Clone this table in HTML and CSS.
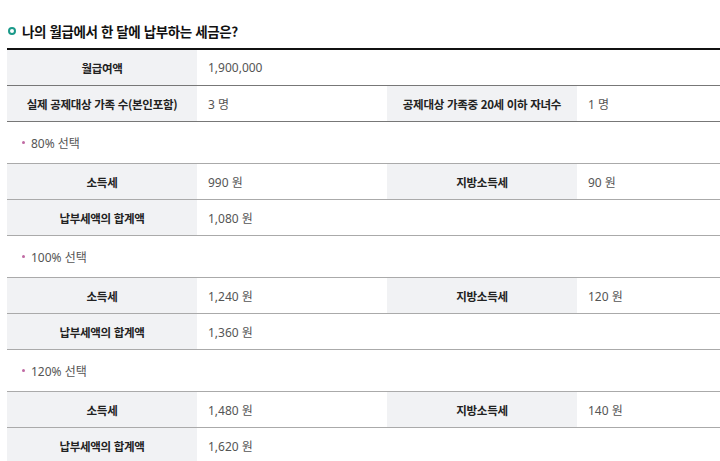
FILE: index.html
```html
<!DOCTYPE html>
<html lang="ko">
<head>
<meta charset="utf-8">
<link rel="stylesheet" href="styles.css">
</head>
<body>
<div class="page">
  <h2 class="title"><span class="ring"></span>나의 월급에서 한 달에 납부하는 세금은?</h2>

  <div class="tbl tbl-main">
    <div class="row">
      <div class="th">월급여액</div>
      <div class="td span3">1,900,000</div>
    </div>
    <div class="row">
      <div class="th">실제 공제대상 가족 수(본인포함)</div>
      <div class="td">3 명</div>
      <div class="th">공제대상 가족중 20세 이하 자녀수</div>
      <div class="td">1 명</div>
    </div>
  </div>

  <p class="sect"><span class="dot"></span>80% 선택</p>
  <div class="tbl">
    <div class="row">
      <div class="th">소득세</div>
      <div class="td">990 원</div>
      <div class="th">지방소득세</div>
      <div class="td">90 원</div>
    </div>
    <div class="row">
      <div class="th">납부세액의 합계액</div>
      <div class="td span3">1,080 원</div>
    </div>
  </div>

  <p class="sect"><span class="dot"></span>100% 선택</p>
  <div class="tbl">
    <div class="row">
      <div class="th">소득세</div>
      <div class="td">1,240 원</div>
      <div class="th">지방소득세</div>
      <div class="td">120 원</div>
    </div>
    <div class="row">
      <div class="th">납부세액의 합계액</div>
      <div class="td span3">1,360 원</div>
    </div>
  </div>

  <p class="sect"><span class="dot"></span>120% 선택</p>
  <div class="tbl">
    <div class="row">
      <div class="th">소득세</div>
      <div class="td">1,480 원</div>
      <div class="th">지방소득세</div>
      <div class="td">140 원</div>
    </div>
    <div class="row">
      <div class="th">납부세액의 합계액</div>
      <div class="td span3">1,620 원</div>
    </div>
  </div>
</div>
</body>
</html>
```

FILE: styles.css
```css
html, body {
  margin: 0;
  padding: 0;
  background: #fff;
  overflow: hidden;
}
body {
  font-family: "Noto Sans", "Noto Sans CJK KR", sans-serif;
  color: #333;
}
.page {
  padding: 17px 0 0 7px;
  width: 760px;
}
.title {
  margin: 0;
  box-sizing: border-box;
  height: 31px;
  padding-bottom: 3px;
  display: flex;
  align-items: center;
  gap: 6px;
  font-size: 13.5px;
  font-weight: 700;
  color: #111;
  font-family: "Noto Sans CJK KR", sans-serif;
  letter-spacing: -0.4px;
}
.ring {
  width: 4px;
  height: 4px;
  border: 2.5px solid #1b9a8a;
  border-radius: 50%;
  margin-left: 1px;
}
.tbl {
  border-top: 1px solid #aaa;
}
.tbl-main {
  border-top: 2px solid #111;
}
.row {
  display: grid;
  grid-template-columns: 190px 190px 190px 190px;
  height: 35px;
  border-bottom: 1px solid #aaa;
}
.tbl-main .row {
  border-bottom-color: #777;
}
.th {
  background: #f1f2f4;
  display: flex;
  align-items: center;
  justify-content: center;
  font-family: "Noto Sans CJK KR", sans-serif;
  font-weight: 700;
  font-size: 11.5px;
  color: #222;
  letter-spacing: -0.3px;
}
.td {
  display: flex;
  align-items: center;
  padding-left: 11px;
  font-size: 12px;
  color: #555;
}
.span3 {
  grid-column: span 3;
}
.sect {
  margin: 0;
  height: 41px;
  display: flex;
  align-items: center;
  gap: 6px;
  padding-left: 15px;
  font-size: 12px;
  color: #555;
}
.dot {
  width: 3px;
  height: 3px;
  border-radius: 50%;
  background: #c06aa3;
}
```
